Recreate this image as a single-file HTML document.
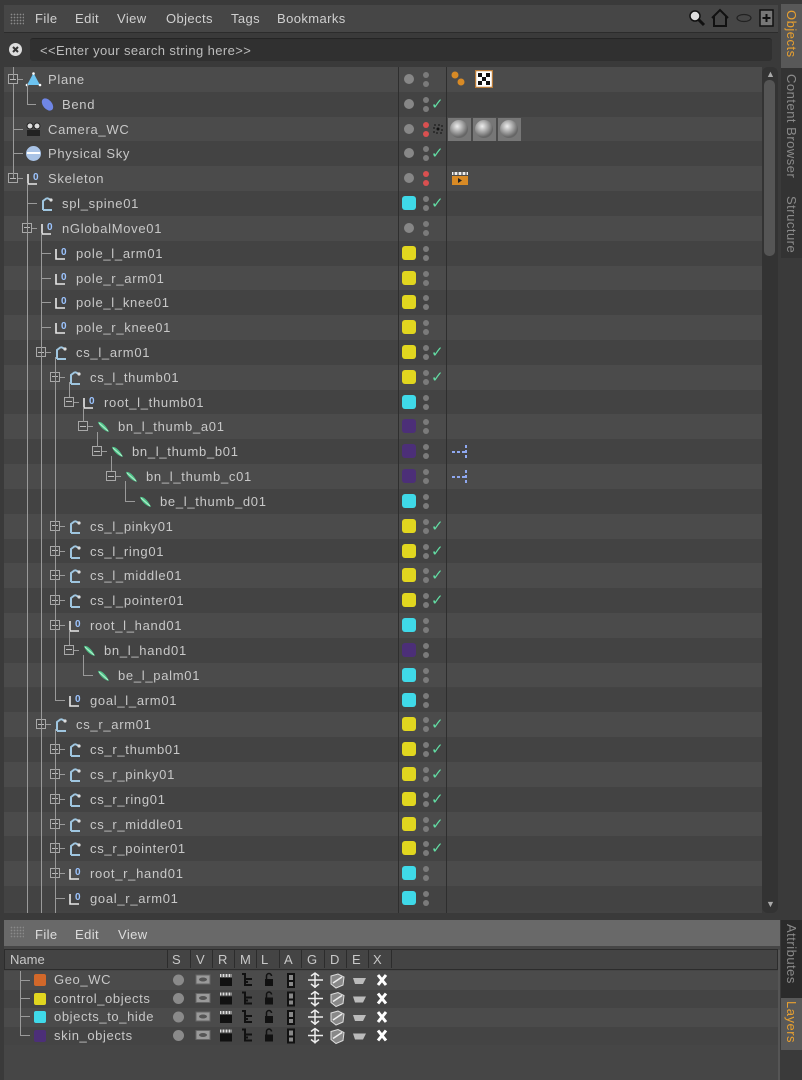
<!DOCTYPE html>
<html><head><meta charset="utf-8">
<style>
*{margin:0;padding:0;box-sizing:border-box}
body{width:802px;height:1080px;background:#3a3a3a;font-family:"Liberation Sans","DejaVu Sans",sans-serif;overflow:hidden;position:relative;color:#cfcfcf}
.abs{position:absolute}
.menu{left:4px;top:5px;width:774px;height:28px;background:#464646;border-bottom:1px solid #2c2c2c}
.menu span{position:absolute;top:6px;font-size:13px;color:#d0d0d0;letter-spacing:0.4px}
.grip{position:absolute;width:14px;height:12px;background-image:radial-gradient(#8a8a8a 35%,transparent 40%);background-size:3px 3px}
.search{left:30px;top:38px;width:742px;height:23px;background:#303030;border-radius:3px;border-top:1px solid #252525}
.search span{position:absolute;left:10px;top:4px;font-size:13px;color:#bdbdbd;letter-spacing:0.4px}
#list{left:4px;top:67px;width:758px;height:846px;background:#444;overflow:hidden}
.r{position:absolute;left:0;width:758px;height:24.82px;background:#434343}
.r.e{background:#4b4b4b}
.r b{position:absolute;top:0;line-height:25px;font-size:13px;font-weight:normal;color:#c8c8c8;white-space:nowrap;letter-spacing:0.7px}
.x{position:absolute;top:7px;width:10px;height:10px;border:1px solid #a8a8a8;background:#474747}
.x::before{content:"";position:absolute;left:1px;top:3.5px;width:6px;height:1px;background:#bbb}
.x.p::after{content:"";position:absolute;left:3.5px;top:1px;width:1px;height:6px;background:#bbb}
.h{position:absolute;top:12px;height:1px;background:#9a9a9a}
.v{position:absolute;width:1px;background:#9a9a9a}
.ic{position:absolute;top:4px;width:17px;height:17px}
.c{position:absolute;left:398px;top:5px;width:14px;height:14px;border-radius:3px}
.cy{background:#e1d61f}.cc{background:#3fd9e8}.cp{background:#4c2f78}
.g{position:absolute;left:400px;top:7px;width:10px;height:10px;border-radius:50%;background:#878787}
.d{position:absolute;left:419px;top:5px;width:6px;height:6px;border-radius:50%;background:#7b7b7b;box-shadow:0 9px 0 #7b7b7b}
.d.red{background:#d95050;box-shadow:0 9px 0 #d95050}
.k{position:absolute;left:427px;top:3px;font-size:15px;color:#62dca3;font-weight:bold}
.sep{position:absolute;top:0;width:1px;height:846px;background:#2e2e2e}
.tab{position:absolute;left:781px;width:21px;background:#333}
.tab span{position:absolute;left:3px;writing-mode:vertical-rl;font-size:13px;color:#8a8a8a;white-space:nowrap;letter-spacing:0.5px}
.lr{position:absolute;left:4px;width:774px;height:18.5px}
.lr b{position:absolute;left:50px;top:1px;font-size:13px;font-weight:normal;color:#c8c8c8;letter-spacing:0.6px}
.lr .sq{position:absolute;left:30px;top:3px;width:12px;height:12px;border-radius:2px}
.lh{position:absolute;top:952px;font-size:13px;color:#c8c8c8}
.lhs{position:absolute;top:950px;width:1px;height:18px;background:#2c2c2c}
</style></head><body>
<svg width="0" height="0" style="position:absolute">
<defs>
<symbol id="joint" viewBox="0 0 17 17"><path d="M3 4v10h9" stroke="#e8e8e8" stroke-width="1.6" fill="none"/><text x="8" y="10" font-size="10" font-family="Liberation Sans" font-weight="bold" fill="#9cc4ff">0</text></symbol>
<symbol id="ctrl" viewBox="0 0 17 17"><path d="M4 15V6l4-3M8 3l4 2M4 15h9" stroke="#9fc6e0" stroke-width="2" fill="none"/><circle cx="12" cy="5" r="1.6" fill="#ddd"/></symbol>
<symbol id="bone" viewBox="0 0 17 17"><path d="M3 4c4-1 9 5 11 10c-5-1-10-6-11-10z" fill="#4fc48a"/><path d="M4 5l9 8" stroke="#b9f0d0" stroke-width="1"/></symbol>
</defs></svg>

<div class="abs menu">
<i class="grip" style="left:6px;top:8px"></i>
<span style="left:31px">File</span><span style="left:71px">Edit</span><span style="left:113px">View</span><span style="left:162px">Objects</span><span style="left:227px">Tags</span><span style="left:273px">Bookmarks</span>
<svg class="abs" style="left:684px;top:4px" width="18" height="18"><circle cx="7" cy="7" r="5" fill="#ddd" stroke="#111" stroke-width="1.5"/><path d="M10 10l6 6" stroke="#111" stroke-width="3"/></svg>
<svg class="abs" style="left:706px;top:3px" width="20" height="20"><path d="M2 10L10 2l8 8M4 8v10h12V8" stroke="#111" stroke-width="2" fill="none"/></svg>
<svg class="abs" style="left:732px;top:8px" width="16" height="10"><ellipse cx="8" cy="5" rx="7" ry="3.5" fill="none" stroke="#222" stroke-width="1.2"/></svg>
<svg class="abs" style="left:755px;top:3px" width="16" height="20"><rect x="1" y="2" width="13" height="16" fill="#777" stroke="#111" stroke-width="1.5"/><path d="M7.5 6v8M3.5 10h8" stroke="#111" stroke-width="2"/></svg>
</div>
<svg class="abs" style="left:8px;top:42px" width="15" height="15"><circle cx="7.5" cy="7.5" r="6.5" fill="#ddd"/><path d="M5 5l5 5M10 5l-5 5" stroke="#333" stroke-width="2"/></svg>
<div class="abs search"><span>&lt;&lt;Enter your search string here&gt;&gt;</span></div>

<div class="abs" id="list">
<div class="r e" style="top:0"><i class="x" style="left:4px"></i><i class="h" style="left:14px;width:5px"></i>
<svg class="ic" style="left:21px" viewBox="0 0 17 17"><path d="M8.5 2L15 14H2z" fill="#6cc3f0"/><circle cx="8.5" cy="2.5" r="1.3" fill="#fff"/><circle cx="2" cy="14" r="1.3" fill="#fff"/><circle cx="15" cy="14" r="1.3" fill="#fff"/></svg>
<b style="left:44px">Plane</b><i class="g"></i><i class="d"></i>
<svg class="abs" style="left:446px;top:3px" width="16" height="18"><circle cx="5" cy="5" r="3.5" fill="#d88a25"/><circle cx="11" cy="12" r="3.5" fill="#d88a25"/></svg>
<svg class="abs" style="left:471px;top:3px" width="18" height="18"><rect x="0.5" y="0.5" width="17" height="17" fill="#fff" stroke="#b87b38" stroke-width="1.5"/><path d="M3 3h4v4H3zM11 3h4v4h-4zM7 7h4v4H7zM3 11h4v4H3zM11 11h4v4h-4z" fill="#111"/></svg>
</div>
<div class="r" style="top:24.82px"><i class="h" style="left:23px;width:9px"></i>
<svg class="ic" style="left:35px" viewBox="0 0 17 17"><ellipse cx="8.5" cy="8.5" rx="4.5" ry="7" transform="rotate(-40 8.5 8.5)" fill="#6f86e6"/></svg>
<b style="left:58px">Bend</b><i class="g"></i><i class="d"></i><i class="k">✓</i></div>
<div class="r e" style="top:49.64px"><i class="h" style="left:9px;width:10px"></i>
<svg class="ic" style="left:21px" viewBox="0 0 17 17"><circle cx="5" cy="5" r="3" fill="#ddd" stroke="#222"/><circle cx="12" cy="5" r="3" fill="#ddd" stroke="#222"/><rect x="2" y="9" width="13" height="6" fill="#222"/></svg>
<b style="left:44px">Camera_WC</b><i class="g"></i><i class="d red"></i>
<svg class="abs" style="left:429px;top:7px" width="10" height="10"><rect x="1" y="1" width="8" height="8" fill="none" stroke="#111" stroke-dasharray="2 2"/><circle cx="5" cy="5" r="1.5" fill="#111"/></svg>
<svg class="abs" style="left:444px;top:1px" width="76" height="23"><defs><radialGradient id="sg" cx="40%" cy="35%" r="60%"><stop offset="0" stop-color="#eee"/><stop offset="1" stop-color="#666"/></radialGradient></defs><rect x="0" y="0" width="23" height="23" fill="#777"/><circle cx="11" cy="11" r="9" fill="url(#sg)"/><rect x="25" y="0" width="23" height="23" fill="#777"/><circle cx="36" cy="11" r="9" fill="url(#sg)"/><rect x="50" y="0" width="23" height="23" fill="#777"/><circle cx="61" cy="11" r="9" fill="url(#sg)"/></svg>
</div>
<div class="r" style="top:74.46px"><i class="h" style="left:9px;width:10px"></i>
<svg class="ic" style="left:21px" viewBox="0 0 17 17"><circle cx="8.5" cy="8.5" r="7.5" fill="#a9c3e6"/><path d="M2 8h13" stroke="#fff" stroke-width="2"/></svg>
<b style="left:44px">Physical Sky</b><i class="g"></i><i class="d"></i><i class="k">✓</i></div>
<div class="r e" style="top:99.28px"><i class="x" style="left:4px"></i><i class="h" style="left:14px;width:5px"></i>
<svg class="ic" style="left:21px"><use href="#joint"/></svg><b style="left:44px">Skeleton</b><i class="g"></i><i class="d red"></i>
<svg class="abs" style="left:447px;top:4px" width="18" height="16"><rect x="1" y="6" width="16" height="9" fill="#d88a25"/><path d="M1 2h16v3H1z" fill="#eee"/><path d="M3 2v3M7 2v3M11 2v3M15 2v3" stroke="#333"/><path d="M7 8l4 2.5-4 2.5z" fill="#222"/></svg>
</div>
<div class="r" style="top:124.1px"><i class="h" style="left:23px;width:10px"></i><svg class="ic" style="left:35px"><use href="#ctrl"/></svg><b style="left:58px">spl_spine01</b><i class="c cc"></i><i class="d"></i><i class="k">✓</i></div>
<div class="r e" style="top:148.92px"><i class="x" style="left:18px"></i><i class="h" style="left:28px;width:5px"></i><svg class="ic" style="left:35px"><use href="#joint"/></svg><b style="left:58px">nGlobalMove01</b><i class="g"></i><i class="d"></i></div>
<div class="r" style="top:173.74px"><i class="h" style="left:37px;width:10px"></i><svg class="ic" style="left:49px"><use href="#joint"/></svg><b style="left:72px">pole_l_arm01</b><i class="c cy"></i><i class="d"></i></div>
<div class="r e" style="top:198.56px"><i class="h" style="left:37px;width:10px"></i><svg class="ic" style="left:49px"><use href="#joint"/></svg><b style="left:72px">pole_r_arm01</b><i class="c cy"></i><i class="d"></i></div>
<div class="r" style="top:223.38px"><i class="h" style="left:37px;width:10px"></i><svg class="ic" style="left:49px"><use href="#joint"/></svg><b style="left:72px">pole_l_knee01</b><i class="c cy"></i><i class="d"></i></div>
<div class="r e" style="top:248.2px"><i class="h" style="left:37px;width:10px"></i><svg class="ic" style="left:49px"><use href="#joint"/></svg><b style="left:72px">pole_r_knee01</b><i class="c cy"></i><i class="d"></i></div>
<div class="r" style="top:273.02px"><i class="x" style="left:32px"></i><i class="h" style="left:42px;width:5px"></i><svg class="ic" style="left:49px"><use href="#ctrl"/></svg><b style="left:72px">cs_l_arm01</b><i class="c cy"></i><i class="d"></i><i class="k">✓</i></div>
<div class="r e" style="top:297.84px"><i class="x" style="left:46px"></i><i class="h" style="left:56px;width:5px"></i><svg class="ic" style="left:63px"><use href="#ctrl"/></svg><b style="left:86px">cs_l_thumb01</b><i class="c cy"></i><i class="d"></i><i class="k">✓</i></div>
<div class="r" style="top:322.66px"><i class="x" style="left:60px"></i><i class="h" style="left:70px;width:5px"></i><svg class="ic" style="left:77px"><use href="#joint"/></svg><b style="left:100px">root_l_thumb01</b><i class="c cc"></i><i class="d"></i></div>
<div class="r e" style="top:347.48px"><i class="x" style="left:74px"></i><i class="h" style="left:84px;width:5px"></i><svg class="ic" style="left:91px"><use href="#bone"/></svg><b style="left:114px">bn_l_thumb_a01</b><i class="c cp"></i><i class="d"></i></div>
<div class="r" style="top:372.3px"><i class="x" style="left:88px"></i><i class="h" style="left:98px;width:5px"></i><svg class="ic" style="left:105px"><use href="#bone"/></svg><b style="left:128px">bn_l_thumb_b01</b><i class="c cp"></i><i class="d"></i>
<svg class="abs" style="left:447px;top:4px" width="18" height="16"><path d="M1 9h3M6 9h3M11 9h3M15 2v3M15 7v3M15 12v3" stroke="#8fa8f0" stroke-width="2"/></svg></div>
<div class="r e" style="top:397.12px"><i class="x" style="left:102px"></i><i class="h" style="left:112px;width:5px"></i><svg class="ic" style="left:119px"><use href="#bone"/></svg><b style="left:142px">bn_l_thumb_c01</b><i class="c cp"></i><i class="d"></i>
<svg class="abs" style="left:447px;top:4px" width="18" height="16"><path d="M1 9h3M6 9h3M11 9h3M15 2v3M15 7v3M15 12v3" stroke="#8fa8f0" stroke-width="2"/></svg></div>
<div class="r" style="top:421.94px"><i class="h" style="left:121px;width:10px"></i><svg class="ic" style="left:133px"><use href="#bone"/></svg><b style="left:156px">be_l_thumb_d01</b><i class="c cc"></i><i class="d"></i></div>
<div class="r e" style="top:446.76px"><i class="x p" style="left:46px"></i><i class="h" style="left:56px;width:5px"></i><svg class="ic" style="left:63px"><use href="#ctrl"/></svg><b style="left:86px">cs_l_pinky01</b><i class="c cy"></i><i class="d"></i><i class="k">✓</i></div>
<div class="r" style="top:471.58px"><i class="x p" style="left:46px"></i><i class="h" style="left:56px;width:5px"></i><svg class="ic" style="left:63px"><use href="#ctrl"/></svg><b style="left:86px">cs_l_ring01</b><i class="c cy"></i><i class="d"></i><i class="k">✓</i></div>
<div class="r e" style="top:496.4px"><i class="x p" style="left:46px"></i><i class="h" style="left:56px;width:5px"></i><svg class="ic" style="left:63px"><use href="#ctrl"/></svg><b style="left:86px">cs_l_middle01</b><i class="c cy"></i><i class="d"></i><i class="k">✓</i></div>
<div class="r" style="top:521.22px"><i class="x p" style="left:46px"></i><i class="h" style="left:56px;width:5px"></i><svg class="ic" style="left:63px"><use href="#ctrl"/></svg><b style="left:86px">cs_l_pointer01</b><i class="c cy"></i><i class="d"></i><i class="k">✓</i></div>
<div class="r e" style="top:546.04px"><i class="x" style="left:46px"></i><i class="h" style="left:56px;width:5px"></i><svg class="ic" style="left:63px"><use href="#joint"/></svg><b style="left:86px">root_l_hand01</b><i class="c cc"></i><i class="d"></i></div>
<div class="r" style="top:570.86px"><i class="x" style="left:60px"></i><i class="h" style="left:70px;width:5px"></i><svg class="ic" style="left:77px"><use href="#bone"/></svg><b style="left:100px">bn_l_hand01</b><i class="c cp"></i><i class="d"></i></div>
<div class="r e" style="top:595.68px"><i class="h" style="left:79px;width:10px"></i><svg class="ic" style="left:91px"><use href="#bone"/></svg><b style="left:114px">be_l_palm01</b><i class="c cc"></i><i class="d"></i></div>
<div class="r" style="top:620.5px"><i class="h" style="left:51px;width:10px"></i><svg class="ic" style="left:63px"><use href="#joint"/></svg><b style="left:86px">goal_l_arm01</b><i class="c cc"></i><i class="d"></i></div>
<div class="r e" style="top:645.32px"><i class="x" style="left:32px"></i><i class="h" style="left:42px;width:5px"></i><svg class="ic" style="left:49px"><use href="#ctrl"/></svg><b style="left:72px">cs_r_arm01</b><i class="c cy"></i><i class="d"></i><i class="k">✓</i></div>
<div class="r" style="top:670.14px"><i class="x p" style="left:46px"></i><i class="h" style="left:56px;width:5px"></i><svg class="ic" style="left:63px"><use href="#ctrl"/></svg><b style="left:86px">cs_r_thumb01</b><i class="c cy"></i><i class="d"></i><i class="k">✓</i></div>
<div class="r e" style="top:694.96px"><i class="x p" style="left:46px"></i><i class="h" style="left:56px;width:5px"></i><svg class="ic" style="left:63px"><use href="#ctrl"/></svg><b style="left:86px">cs_r_pinky01</b><i class="c cy"></i><i class="d"></i><i class="k">✓</i></div>
<div class="r" style="top:719.78px"><i class="x p" style="left:46px"></i><i class="h" style="left:56px;width:5px"></i><svg class="ic" style="left:63px"><use href="#ctrl"/></svg><b style="left:86px">cs_r_ring01</b><i class="c cy"></i><i class="d"></i><i class="k">✓</i></div>
<div class="r e" style="top:744.6px"><i class="x p" style="left:46px"></i><i class="h" style="left:56px;width:5px"></i><svg class="ic" style="left:63px"><use href="#ctrl"/></svg><b style="left:86px">cs_r_middle01</b><i class="c cy"></i><i class="d"></i><i class="k">✓</i></div>
<div class="r" style="top:769.42px"><i class="x p" style="left:46px"></i><i class="h" style="left:56px;width:5px"></i><svg class="ic" style="left:63px"><use href="#ctrl"/></svg><b style="left:86px">cs_r_pointer01</b><i class="c cy"></i><i class="d"></i><i class="k">✓</i></div>
<div class="r e" style="top:794.24px"><i class="x p" style="left:46px"></i><i class="h" style="left:56px;width:5px"></i><svg class="ic" style="left:63px"><use href="#joint"/></svg><b style="left:86px">root_r_hand01</b><i class="c cc"></i><i class="d"></i></div>
<div class="r" style="top:819.06px"><i class="h" style="left:51px;width:10px"></i><svg class="ic" style="left:63px"><use href="#joint"/></svg><b style="left:86px">goal_r_arm01</b><i class="c cc"></i><i class="d"></i></div>
<i class="v" style="left:9px;top:0;height:12px"></i>
<i class="v" style="left:9px;top:17px;height:94px"></i>
<i class="v" style="left:23px;top:17px;height:20px"></i>
<i class="v" style="left:23px;top:116px;height:730px"></i>
<i class="v" style="left:37px;top:166px;height:680px"></i>
<i class="v" style="left:51px;top:290px;height:343px"></i>
<i class="v" style="left:51px;top:662px;height:184px"></i>
<i class="v" style="left:65px;top:315px;height:15px"></i>
<i class="v" style="left:79px;top:340px;height:15px"></i>
<i class="v" style="left:93px;top:365px;height:15px"></i>
<i class="v" style="left:107px;top:389px;height:15px"></i>
<i class="v" style="left:121px;top:414px;height:20px"></i>
<i class="v" style="left:65px;top:563px;height:15px"></i>
<i class="v" style="left:79px;top:588px;height:20px"></i>
<i class="sep" style="left:394px"></i><i class="sep" style="left:442px"></i>
</div>
<div class="abs" style="left:762px;top:67px;width:16px;height:846px;background:#333;border-radius:6px"></div>
<div class="abs" style="left:764px;top:80px;width:11px;height:176px;background:#555;border-radius:5px"></div>
<div class="abs" style="left:766px;top:69px;font-size:9px;color:#aaa">▲</div>
<div class="abs" style="left:766px;top:899px;font-size:9px;color:#aaa">▼</div>

<div class="tab" style="top:0;height:913px;background:#3a3a3a"></div>
<div class="tab" style="top:4px;height:64px;background:#585858"><span style="top:6px;color:#e8a030">Objects</span></div>
<div class="tab" style="top:68px;height:122px;background:#333"><span style="top:6px">Content Browser</span></div>
<div class="tab" style="top:190px;height:68px;background:#333"><span style="top:6px">Structure</span></div>
<div class="tab" style="top:920px;height:78px;background:#2b2b2b"><span style="top:4px">Attributes</span></div>
<div class="tab" style="top:998px;height:52px;background:#595959"><span style="top:3px;color:#e8a030">Layers</span></div>

<div class="abs" style="left:0;top:913px;width:780px;height:7px;background:#3a3a3a"></div>
<div class="abs" style="left:4px;top:920px;width:776px;height:26px;background:#696969"></div>
<i class="grip" style="left:10px;top:926px"></i>
<span class="abs" style="left:35px;top:927px;font-size:13px;color:#ddd;letter-spacing:0.4px">File</span>
<span class="abs" style="left:75px;top:927px;font-size:13px;color:#ddd;letter-spacing:0.4px">Edit</span>
<span class="abs" style="left:118px;top:927px;font-size:13px;color:#ddd;letter-spacing:0.4px">View</span>
<div class="abs" style="left:4px;top:946px;width:776px;height:134px;background:#464646"></div>
<div class="abs" style="left:4px;top:949px;width:774px;height:21px;background:#444;border:1px solid #2c2c2c"></div>
<span class="lh" style="left:10px">Name</span>
<span class="lh" style="left:172px">S</span><span class="lh" style="left:196px">V</span><span class="lh" style="left:218px">R</span><span class="lh" style="left:240px">M</span><span class="lh" style="left:261px">L</span><span class="lh" style="left:284px">A</span><span class="lh" style="left:307px">G</span><span class="lh" style="left:330px">D</span><span class="lh" style="left:352px">E</span><span class="lh" style="left:373px">X</span>
<i class="lhs" style="left:167px"></i><i class="lhs" style="left:190px"></i><i class="lhs" style="left:212px"></i><i class="lhs" style="left:234px"></i><i class="lhs" style="left:256px"></i><i class="lhs" style="left:279px"></i><i class="lhs" style="left:301px"></i><i class="lhs" style="left:324px"></i><i class="lhs" style="left:346px"></i><i class="lhs" style="left:368px"></i><i class="lhs" style="left:391px"></i>
<div class="lr" style="top:971px;background:#4b4b4b"><i class="sq" style="background:#d2682a"></i><b>Geo_WC</b></div>
<div class="lr" style="top:989.5px;background:#444"><i class="sq" style="background:#e1d61f"></i><b>control_objects</b></div>
<div class="lr" style="top:1008px;background:#4b4b4b"><i class="sq" style="background:#3fd9e8"></i><b>objects_to_hide</b></div>
<div class="lr" style="top:1026.5px;background:#444"><i class="sq" style="background:#4c2f78"></i><b>skin_objects</b></div>
<i class="v" style="left:20px;top:971px;height:64px"></i>
<i class="h" style="left:20px;top:980px;width:10px"></i><i class="h" style="left:20px;top:998px;width:10px"></i><i class="h" style="left:20px;top:1016px;width:10px"></i><i class="h" style="left:20px;top:1035px;width:10px"></i>
<svg class="abs" style="left:170px;top:971px" width="220" height="75">
<g id="lrow">
<circle cx="8.5" cy="9" r="5.5" fill="#8a8a8a"/>
<rect x="26" y="4" width="14" height="9" fill="#9a9a9a" stroke="#666"/><ellipse cx="33" cy="8.5" rx="4" ry="2" fill="#555"/>
<rect x="50" y="7" width="12" height="8" fill="#111"/><path d="M50 3h12v3H50z" fill="#ddd"/><path d="M52 3v3M55 3v3M58 3v3M61 3v3" stroke="#333"/>
<path d="M72 3h3v11h7M75 8h7M75 11h3" stroke="#111" stroke-width="2" fill="none"/>
<rect x="95" y="8" width="8" height="7" fill="#111"/><path d="M96.5 8V5a2.5 2.5 0 015 0" stroke="#111" stroke-width="1.5" fill="none"/>
<rect x="117" y="2" width="8" height="15" fill="#111"/><path d="M119 4h4v5h-4zM119 11h4v4h-4z" fill="#888"/>
<path d="M145 2v15M138 9h15M141 5l4-3 4 3M141 13l4 3 4-3" stroke="#eee" stroke-width="1.5" fill="none"/>
<path d="M161 5l7-2 6 3-1 8-7 3-5-4z" fill="#888" stroke="#ddd"/><path d="M163 12l9-6" stroke="#eee" stroke-width="1.5"/>
<path d="M183 7h13l-3 6h-8z" fill="#bbb"/>
<path d="M208 4l8 10M216 4l-8 10" stroke="#fff" stroke-width="3"/>
</g>
<use href="#lrow" y="18.5"/><use href="#lrow" y="37"/><use href="#lrow" y="55.5"/>
</svg>
<div class="abs" style="left:778px;top:950px;width:2px;height:130px;background:#555"></div>
</body></html>
